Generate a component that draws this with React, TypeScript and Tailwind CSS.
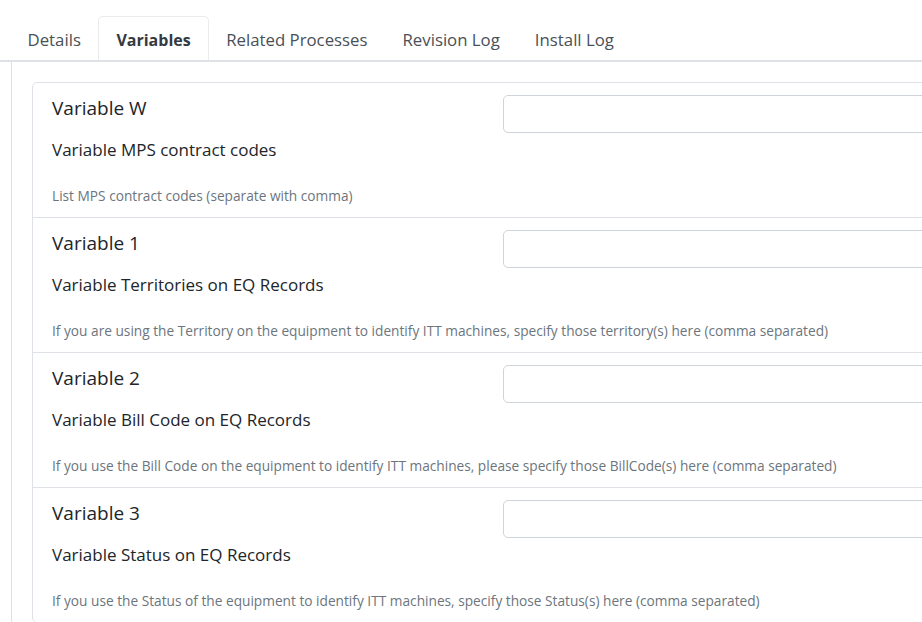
import React from "react";

const rows = [
  {
    title: "Variable W",
    sub: "Variable MPS contract codes",
    help: "List MPS contract codes (separate with comma)",
  },
  {
    title: "Variable 1",
    sub: "Variable Territories on EQ Records",
    help: "If you are using the Territory on the equipment to identify ITT machines, specify those territory(s) here (comma separated)",
  },
  {
    title: "Variable 2",
    sub: "Variable Bill Code on EQ Records",
    help: "If you use the Bill Code on the equipment to identify ITT machines, please specify those BillCode(s) here (comma separated)",
  },
  {
    title: "Variable 3",
    sub: "Variable Status on EQ Records",
    help: "If you use the Status of the equipment to identify ITT machines, specify those Status(s) here (comma separated)",
  },
];

const tabs = ["Details", "Variables", "Related Processes", "Revision Log", "Install Log"];

export default function App() {
  return (
    <div
      className="w-[922px] h-[622px] overflow-hidden bg-white"
      style={{ fontFamily: '"Open Sans", "Noto Sans", sans-serif' }}
    >
      <div className="w-[1150px] pt-[16px]">
        <div className="flex border-b-2 border-[#dee2e6] pl-[10px]">
          {tabs.map((t) => (
            <div
              key={t}
              className={
                t === "Variables"
                  ? "h-[44px] px-[17px] pt-[3px] flex items-center text-[16px] font-bold text-[#343a40] border border-b-0 border-[#e9ecef] rounded-t-[5px]"
                  : "h-[44px] px-[17.5px] pt-[4px] flex items-center text-[16.8px] text-[#495057]"
              }
            >
              {t}
            </div>
          ))}
        </div>
        <div className="ml-[11px] border border-t-0 border-[#dee2e6] rounded-b-[5px] px-[20px] pt-[20px] pb-[20px]">
          <div className="border border-[#dee2e6] rounded-[5px]">
            {rows.map((r, i) => (
              <div
                key={r.title}
                className={
                  i === 0
                    ? "flex pl-[19px] pt-[12px] pb-[11px]"
                    : "flex pl-[19px] pt-[12px] pb-[11px] border-t border-[#dee2e6]"
                }
              >
                <div className="w-[451px] shrink-0 flex flex-col">
                  <div className="text-[19px] leading-[24px] text-[#212529] mt-[1px]">{r.title}</div>
                  <div className="text-[17px] leading-[27px] text-[#212529] mt-[16px]">{r.sub}</div>
                  <div className="text-[13.7px] leading-[20px] text-[#6c757d] mt-[23px] whitespace-nowrap">{r.help}</div>
                </div>
                <div className="flex-1">
                  <div className="h-[38px] border border-[#ced4da] rounded-[5px] bg-white" />
                </div>
              </div>
            ))}
          </div>
        </div>
      </div>
    </div>
  );
}
